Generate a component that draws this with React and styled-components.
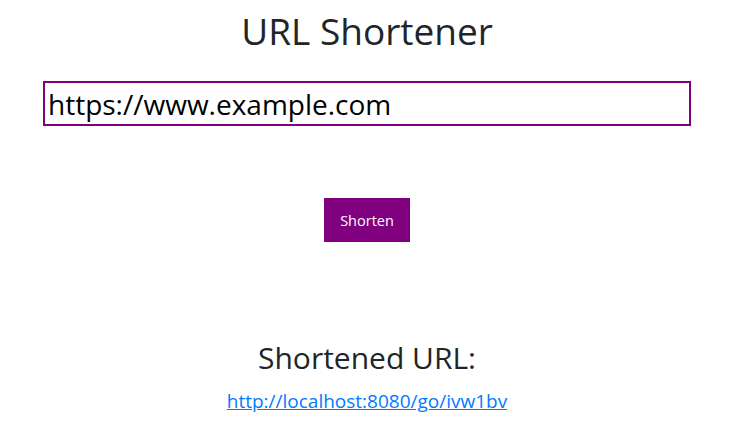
import React, { useState } from 'react';
import styled, { createGlobalStyle } from 'styled-components';

const GlobalStyle = createGlobalStyle`
  body {
    margin: 0;
    background: #fff;
    color: #212529;
    font-family: "Open Sans", "Noto Sans", sans-serif;
  }
`;

const Page = styled.div`
  display: flex;
  flex-direction: column;
  align-items: center;
  padding: 8px 5px 0 0;
`;

const Title = styled.h1`
  margin: 0;
  font-size: 37px;
  font-weight: 400;
  line-height: 46px;
`;

const UrlInput = styled.input`
  box-sizing: border-box;
  width: 648px;
  height: 45px;
  margin-top: 27px;
  padding: 0 3px;
  border: 2px solid #800080;
  font-family: inherit;
  font-size: 28px;
  color: #000;
  outline: none;
`;

const ShortenButton = styled.button`
  margin-top: 72px;
  width: 86px;
  height: 44px;
  background: #800080;
  color: #fff;
  border: none;
  font-family: inherit;
  font-size: 14.5px;
  cursor: pointer;
`;

const Subtitle = styled.h2`
  margin: 96px 0 0;
  font-size: 30px;
  font-weight: 400;
  line-height: 40px;
`;

const ResultLink = styled.a`
  margin-top: 10px;
  font-size: 19px;
  color: #007bff;
  text-decoration: underline;
`;

export default function App() {
  const [url, setUrl] = useState('https://www.example.com');
  return (
    <>
      <GlobalStyle />
      <Page>
        <Title>URL Shortener</Title>
        <UrlInput value={url} onChange={e => setUrl(e.target.value)} />
        <ShortenButton>Shorten</ShortenButton>
        <Subtitle>Shortened URL:</Subtitle>
        <ResultLink href="#">http://localhost:8080/go/ivw1bv</ResultLink>
      </Page>
    </>
  );
}
